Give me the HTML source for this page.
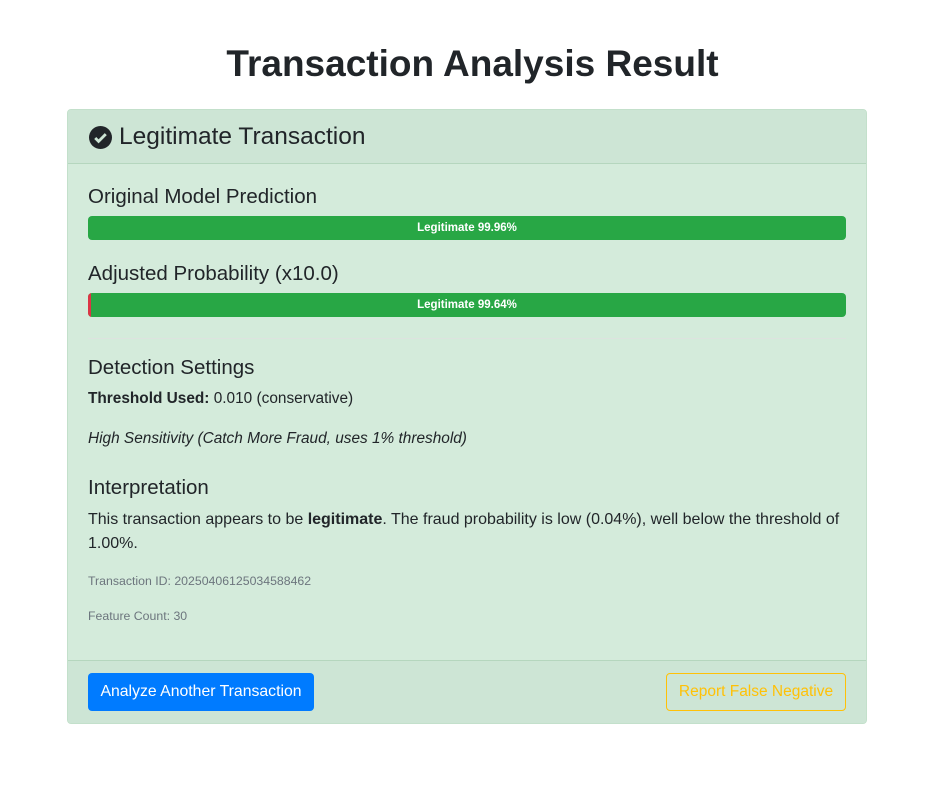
<!DOCTYPE html><html><head><style>
body{margin:0;background:#fff;font-family:"Liberation Sans",sans-serif;color:#212529;}
h1{margin:0;position:absolute;top:39px;width:945px;text-align:center;font-size:37px;font-weight:bold;line-height:50px;}
.card{position:absolute;left:67px;top:109px;width:798px;height:613px;border:1px solid #c3e0cb;border-radius:4px;background:#d4ebdb;overflow:hidden}
.hd{height:53px;border-bottom:1px solid #b5d6be;background:#cde5d5;position:relative}
.hd span{position:absolute;left:51px;top:13px;font-size:24.5px}
.t{position:absolute;left:20px;font-size:20.5px}
.bar{position:absolute;left:20px;width:758px;height:24px;border-radius:4px;background:#28a745;color:#fff;font-size:11.5px;font-weight:bold;text-align:center;line-height:24px;overflow:hidden}
.p{position:absolute;left:20px;font-size:15.4px}
.s{position:absolute;left:20px;font-size:12.3px;color:#6c757d}
.ft{position:absolute;top:550px;left:0;right:0;bottom:0;border-top:1px solid #b5d6be;background:#cde5d5}
.b1{position:absolute;left:20px;top:12px;width:226px;height:38px;background:#007bff;color:#fff;border-radius:4px;font-size:15.8px;text-align:center;line-height:38px}
.b2{position:absolute;left:598px;top:12px;width:178px;height:36px;border:1px solid #ffc107;color:#ffc107;border-radius:4px;font-size:15.5px;text-align:center;line-height:36px}
</style></head><body>
<h1>Transaction Analysis Result</h1>
<div class="card">
<div class="hd"><svg style="position:absolute;left:21px;top:16px" width="23" height="23" viewBox="0 0 24 24"><circle cx="12" cy="12" r="12" fill="#212529"/><path d="M6.5 12.5l3.5 3.5 7.5-7.5" stroke="#cde5d5" stroke-width="3" fill="none"/></svg><span>Legitimate Transaction</span></div>
<div class="t" style="top:75px">Original Model Prediction</div>
<div class="bar" style="top:106px">Legitimate 99.96%</div>
<div class="t" style="top:152px">Adjusted Probability (x10.0)</div>
<div class="bar" style="top:183px"><div style="position:absolute;left:0;top:0;width:3px;height:24px;background:#dc3545"></div>Legitimate 99.64%</div>
<div style="position:absolute;left:20px;top:228px;width:758px;border-top:1px solid #dde3df"></div>
<div class="t" style="top:246px">Detection Settings</div>
<div class="p" style="top:280px"><b>Threshold Used:</b> 0.010 (conservative)</div>
<div class="p" style="top:320px"><i>High Sensitivity (Catch More Fraud, uses 1% threshold)</i></div>
<div class="t" style="top:366px">Interpretation</div>
<div class="p" style="top:398px;width:760px;line-height:24px;font-size:16px">This transaction appears to be <b>legitimate</b>. The fraud probability is low (0.04%), well below the threshold of 1.00%.</div>
<div class="s" style="top:464px">Transaction ID: 20250406125034588462</div>
<div class="s" style="top:499px">Feature Count: 30</div>
<div class="ft"><div class="b1">Analyze Another Transaction</div><div class="b2">Report False Negative</div></div>
</div>
</body></html>
